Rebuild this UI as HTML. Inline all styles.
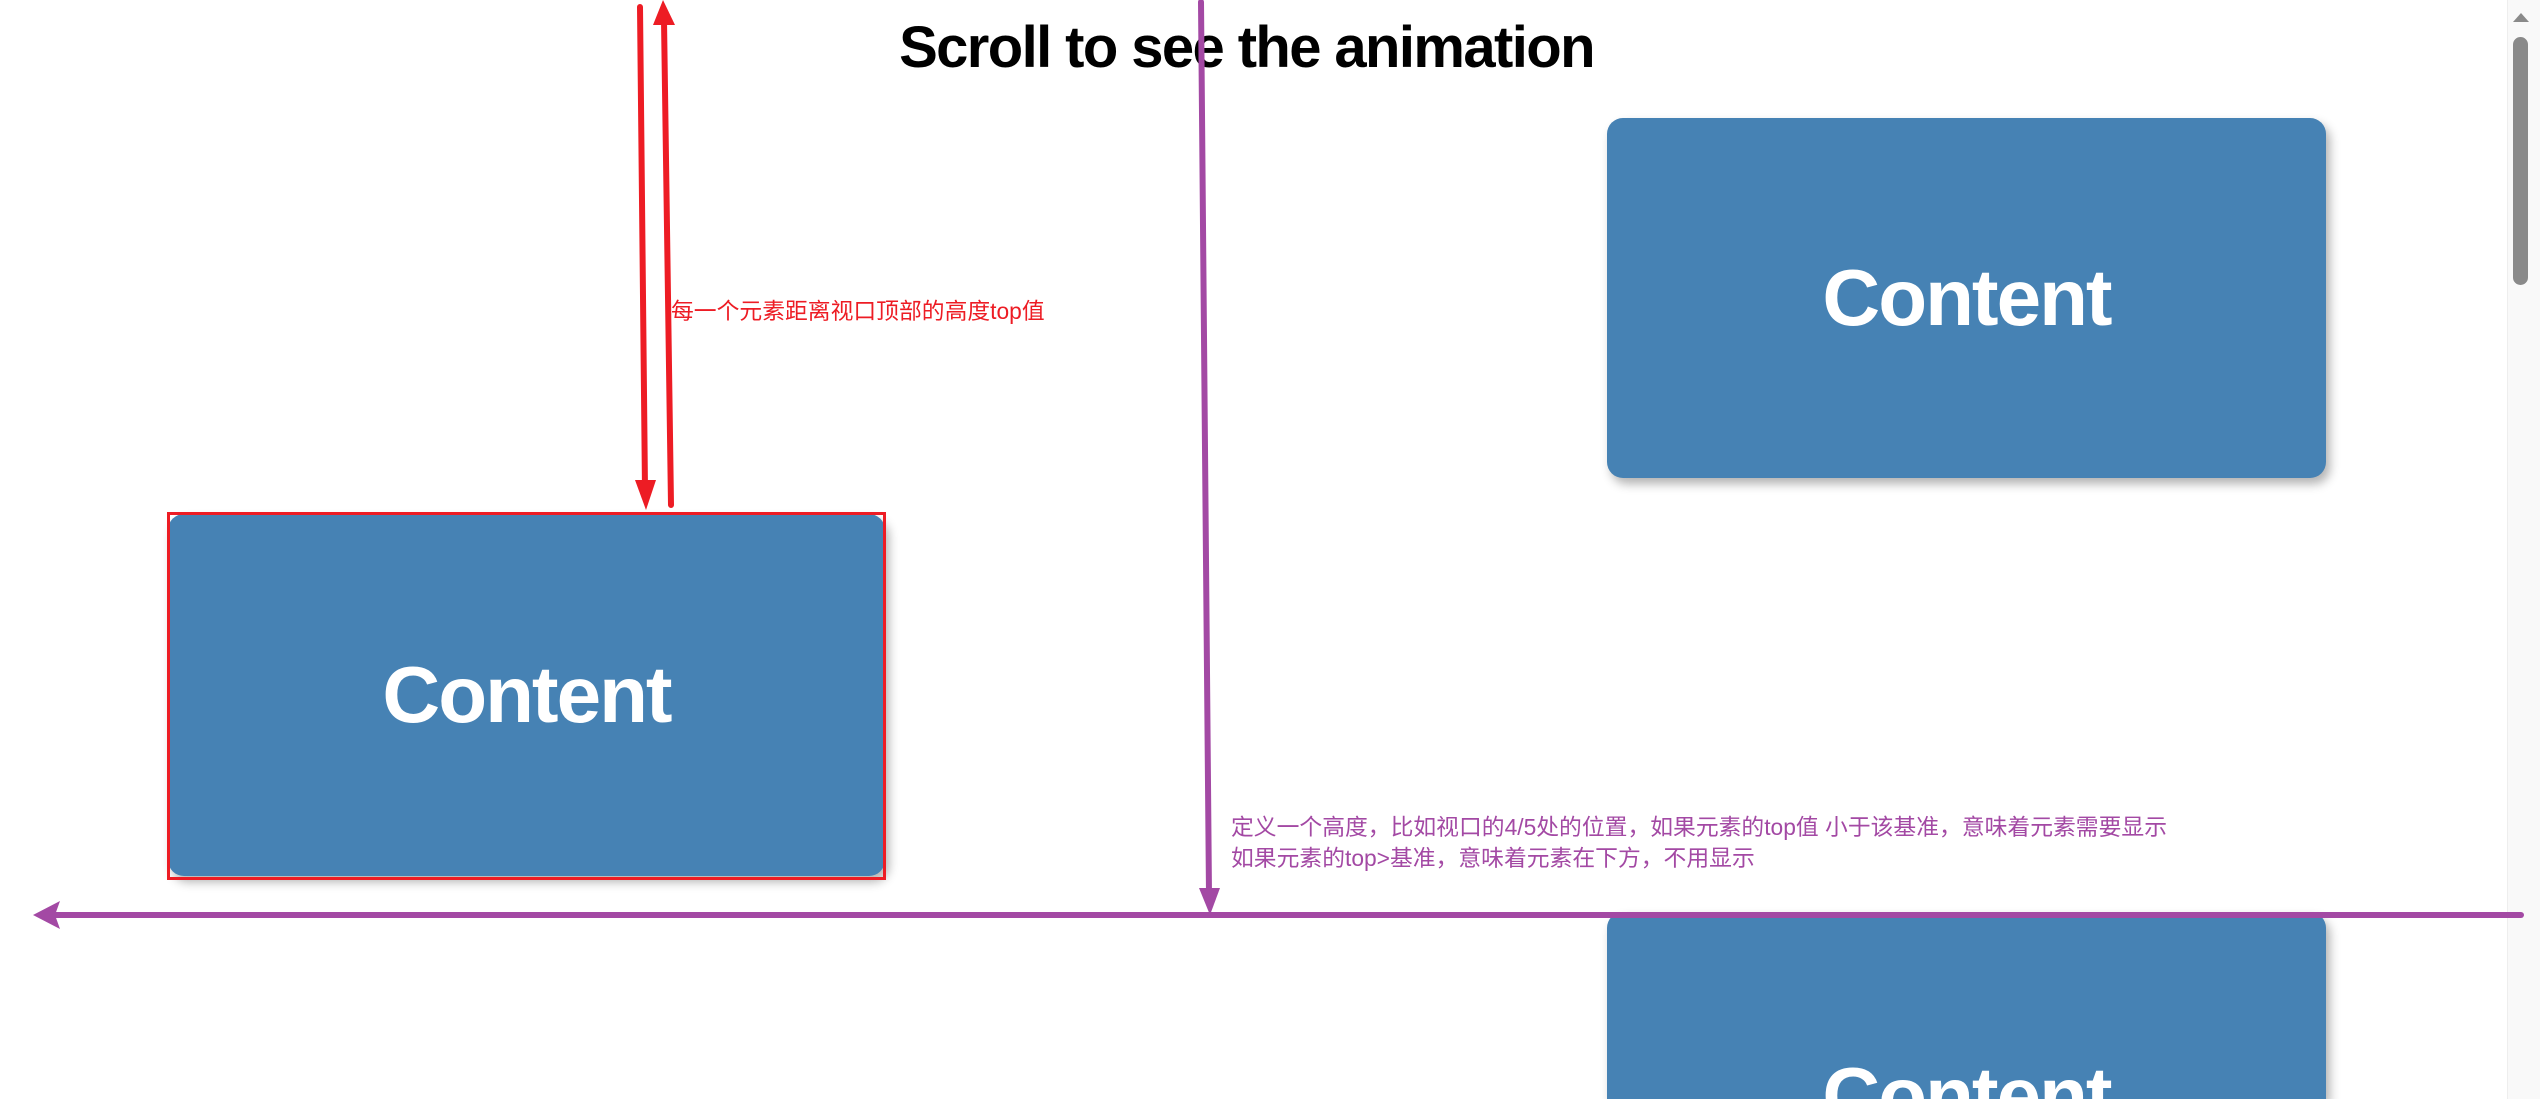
<!DOCTYPE html>
<html><head><meta charset="utf-8"><style>
html,body{margin:0;padding:0;width:2540px;height:1099px;overflow:hidden;background:#fff}
#w{position:relative;width:2540px;height:1099px;overflow:hidden;font-family:"Liberation Sans",sans-serif}
.box{position:absolute;background:#4682b4;border-radius:16px;box-shadow:4px 6px 10px rgba(0,0,0,.3);color:#fff;font-weight:bold;font-size:80px;display:flex;align-items:center;justify-content:center;letter-spacing:-2px}
h1{position:absolute;margin:0;left:0;width:2493px;top:14px;text-align:center;font-size:58px;font-weight:bold;color:#000;letter-spacing:-1.6px}
.t{position:absolute;font-family:"Liberation Sans","Noto Sans CJK SC",sans-serif;font-size:22.8px;white-space:nowrap;line-height:31px}
</style></head><body><div id="w">
<h1>Scroll to see the animation</h1>
<div class="box" style="left:1607px;top:118px;width:719px;height:360px">Content</div>
<div class="box" style="left:168px;top:514px;width:717px;height:362px">Content</div>
<div style="position:absolute;left:167px;top:512px;width:713px;height:362px;border:3px solid #ed1c24"></div>
<div class="box" style="left:1607px;top:912px;width:719px;height:187px;border-bottom-left-radius:0;border-bottom-right-radius:0;align-items:flex-start"><span style="margin-top:138px">Content</span></div>
<div class="t" style="left:671px;top:296px;color:#ed1c24">每一个元素距离视口顶部的高度top值</div>
<div class="t" style="left:1231px;top:812px;color:#a349a4">定义一个高度，比如视口的4/5处的位置，如果元素的top值 小于该基准，意味着元素需要显示<br>如果元素的top&gt;基准，意味着元素在下方，不用显示</div>
<div style="position:absolute;left:2507px;top:0;width:33px;height:1099px;background:#f9f9f9;border-left:1px solid #eee"></div>
<div style="position:absolute;left:2513px;top:37px;width:15px;height:248px;background:#8a8a8a;border-radius:8px"></div>
<div style="position:absolute;left:2513px;top:13px;width:0;height:0;border-left:8px solid transparent;border-right:8px solid transparent;border-bottom:9px solid #8a8a8a"></div>
<svg width="2540" height="1099" style="position:absolute;left:0;top:0">
<g stroke="#ed1c24" stroke-width="6" stroke-linecap="round" fill="#ed1c24">
<line x1="640" y1="7" x2="645" y2="490"/>
<polygon points="635,480 656,480 646,510" stroke="none"/>
<line x1="671" y1="505" x2="664" y2="20"/>
<polygon points="653,25 675,25 663,0" stroke="none"/>
</g>
<g stroke="#a349a4" stroke-width="6" stroke-linecap="round" fill="#a349a4">
<line x1="1201" y1="2" x2="1209" y2="895"/>
<polygon points="1199,888 1220,888 1210,915" stroke="none"/>
<line x1="2521" y1="915" x2="50" y2="915"/>
<polygon points="33,915 60,901 55,915 60,929" stroke="none"/>
</g>
</svg>
</div></body></html>
